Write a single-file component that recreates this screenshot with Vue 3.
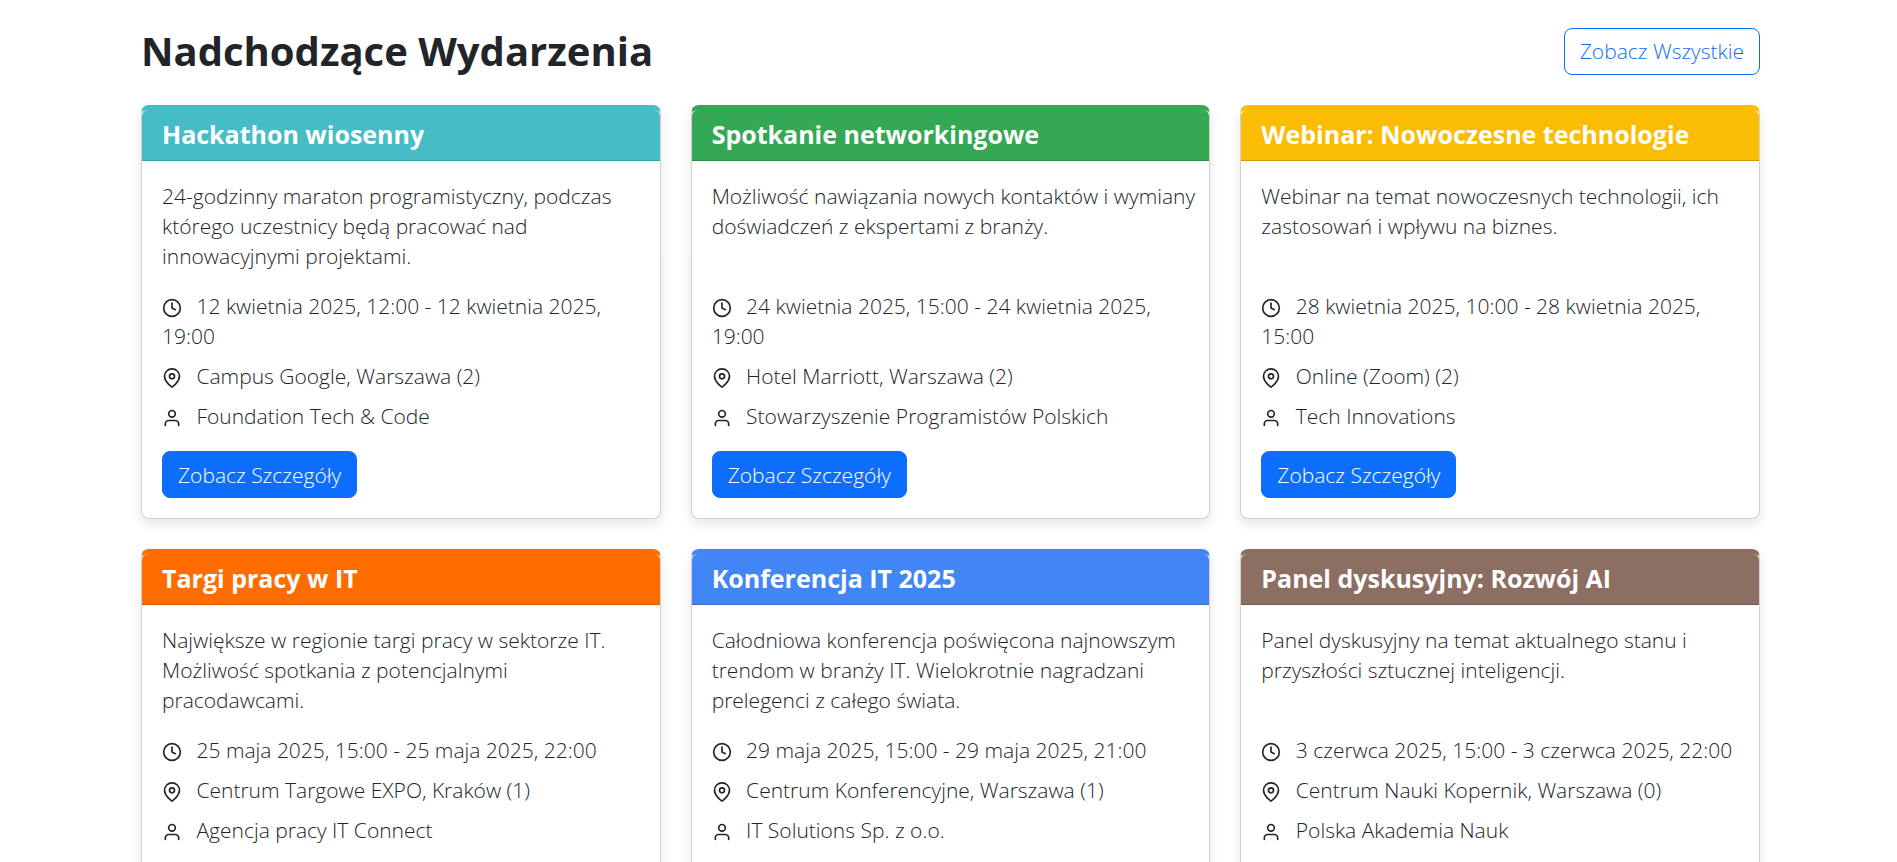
<script setup>
const events = [
  {
    title: 'Hackathon wiosenny',
    color: '#46bdc6',
    description: '24-godzinny maraton programistyczny, podczas którego uczestnicy będą pracować nad innowacyjnymi projektami.',
    date: '12 kwietnia 2025, 12:00 - 12 kwietnia 2025, 19:00',
    place: 'Campus Google, Warszawa (2)',
    host: 'Foundation Tech & Code'
  },
  {
    title: 'Spotkanie networkingowe',
    color: '#34a853',
    description: 'Możliwość nawiązania nowych kontaktów i wymiany doświadczeń z ekspertami z branży.',
    date: '24 kwietnia 2025, 15:00 - 24 kwietnia 2025, 19:00',
    place: 'Hotel Marriott, Warszawa (2)',
    host: 'Stowarzyszenie Programistów Polskich'
  },
  {
    title: 'Webinar: Nowoczesne technologie',
    color: '#fbbc04',
    description: 'Webinar na temat nowoczesnych technologii, ich zastosowań i wpływu na biznes.',
    date: '28 kwietnia 2025, 10:00 - 28 kwietnia 2025, 15:00',
    place: 'Online (Zoom) (2)',
    host: 'Tech Innovations'
  },
  {
    title: 'Targi pracy w IT',
    color: '#ff6d01',
    description: 'Największe w regionie targi pracy w sektorze IT. Możliwość spotkania z potencjalnymi pracodawcami.',
    date: '25 maja 2025, 15:00 - 25 maja 2025, 22:00',
    place: 'Centrum Targowe EXPO, Kraków (1)',
    host: 'Agencja pracy IT Connect'
  },
  {
    title: 'Konferencja IT 2025',
    color: '#4285f4',
    description: 'Całodniowa konferencja poświęcona najnowszym trendom w branży IT. Wielokrotnie nagradzani prelegenci z całego świata.',
    date: '29 maja 2025, 15:00 - 29 maja 2025, 21:00',
    place: 'Centrum Konferencyjne, Warszawa (1)',
    host: 'IT Solutions Sp. z o.o.'
  },
  {
    title: 'Panel dyskusyjny: Rozwój AI',
    color: '#8d6e63',
    description: 'Panel dyskusyjny na temat aktualnego stanu i przyszłości sztucznej inteligencji.',
    date: '3 czerwca 2025, 15:00 - 3 czerwca 2025, 22:00',
    place: 'Centrum Nauki Kopernik, Warszawa (0)',
    host: 'Polska Akademia Nauk'
  }
]
</script>

<template>
  <main class="page">
    <div class="container">
      <div class="top">
        <h1>Nadchodzące Wydarzenia</h1>
        <a class="btn btn-outline" href="#">Zobacz Wszystkie</a>
      </div>

      <div class="grid">
        <article v-for="e in events" :key="e.title" class="card" :style="{ '--accent': e.color }">
          <h2 class="card-header">{{ e.title }}</h2>
          <div class="card-body">
            <p class="description">{{ e.description }}</p>
            <ul class="details">
              <li>
                <svg class="icon" viewBox="0 0 24 24" aria-hidden="true">
                  <circle cx="12" cy="12" r="10" />
                  <path d="M12 6v6l4 2" />
                </svg>
                {{ e.date }}
              </li>
              <li>
                <svg class="icon" viewBox="0 0 24 24" aria-hidden="true">
                  <path d="M21 10c0 7-9 13-9 13s-9-6-9-13a9 9 0 0 1 18 0z" />
                  <circle cx="12" cy="10" r="3" />
                </svg>
                {{ e.place }}
              </li>
              <li>
                <svg class="icon" viewBox="0 0 24 24" aria-hidden="true">
                  <path d="M20 21v-2a4 4 0 0 0-4-4H8a4 4 0 0 0-4 4v2" />
                  <circle cx="12" cy="7" r="4" />
                </svg>
                {{ e.host }}
              </li>
            </ul>
            <a class="btn btn-primary" href="#">Zobacz Szczegóły</a>
          </div>
        </article>
      </div>
    </div>
  </main>
</template>

<style>
body {
  margin: 0;
  background: #fff;
}
</style>

<style scoped>
.page {
  padding: 27px 15px 30px 19px;
  color: #212529;
  font-family: "Open Sans", "Noto Sans", sans-serif;
  font-size: 21px;
  font-weight: 300;
  line-height: 30px;
}

.container {
  max-width: 1619px;
  margin: 0 auto;
}

.top {
  display: flex;
  align-items: center;
  justify-content: space-between;
  margin-bottom: 30px;
}

h1 {
  margin: 0;
  font-size: 40px;
  font-weight: 700;
  line-height: 48px;
}

.btn {
  display: inline-flex;
  align-items: center;
  box-sizing: border-box;
  height: 47px;
  padding: 0 15px;
  border: 1px solid #0d6efd;
  border-radius: 8px;
  text-decoration: none;
}

.btn-outline {
  color: #0d6efd;
}

.btn-primary {
  align-self: flex-start;
  background: #0d6efd;
  color: #fff;
}

.grid {
  display: grid;
  grid-template-columns: repeat(3, minmax(0, 1fr));
  gap: 30px;
}

.card {
  display: flex;
  flex-direction: column;
  border: 1px solid rgba(0, 0, 0, 0.175);
  border-top: 5px solid var(--accent);
  border-radius: 8px;
  background: #fff;
  box-shadow: 0 5px 12px rgba(0, 0, 0, 0.1);
}

.card-header {
  margin: 0;
  padding: 9px 20px 11px;
  border-bottom: 1px solid rgba(0, 0, 0, 0.175);
  border-radius: 6px 6px 0 0;
  background: var(--accent);
  color: #fff;
  font-size: 25px;
  font-weight: 700;
  line-height: 30px;
}

.card-body {
  display: flex;
  flex: 1;
  flex-direction: column;
  padding: 20px 12px 20px 20px;
}

.description {
  flex: 1;
  margin: 0 0 20px;
}

.details {
  margin: 0 0 20px;
  padding: 0;
  list-style: none;
}

.details li + li {
  margin-top: 10px;
}

.icon {
  width: 20px;
  height: 20px;
  margin-right: 9px;
  vertical-align: middle;
  fill: none;
  stroke: currentColor;
  stroke-width: 2;
  stroke-linecap: round;
  stroke-linejoin: round;
}
</style>
